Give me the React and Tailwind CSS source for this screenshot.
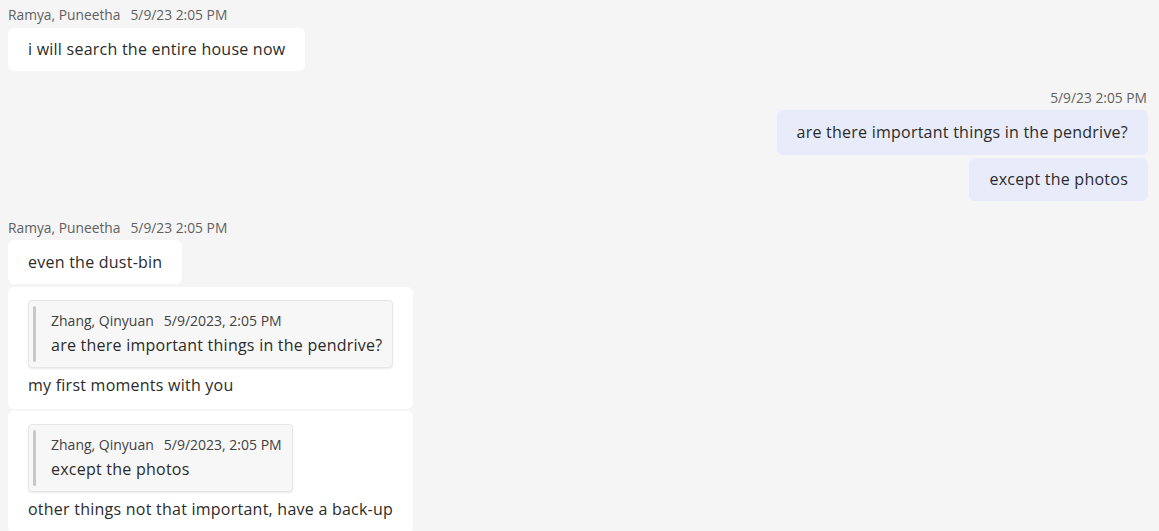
import React from 'react'

const font = { fontFamily: '"Segoe UI", "Open Sans", "Noto Sans", sans-serif' }

const Meta = ({ name, time, right }) => (
    <div className={`flex gap-[10px] text-[13.8px] leading-[16px] text-[#616161] ${right ? 'justify-end pr-[1px]' : ''}`}>
        {name && <span>{name}</span>}
        <span>{time}</span>
    </div>
)

const Quote = ({ name, time, text }) => (
    <div className="inline-flex rounded-[4px] border border-[#e6e6e6] bg-[#f7f7f7] px-[4px] py-[5px] shadow-[0_1px_2px_rgba(0,0,0,0.08)]">
        <div className="w-[3px] rounded-full bg-[#c8c8c8]" />
        <div className="pl-[15px] pr-[6px]">
            <div className="flex gap-[10px] pt-[6px] text-[14px] leading-[18px] text-[#424242]">
                <span>{name}</span>
                <span>{time}</span>
            </div>
            <div className="pt-[2px] pb-[4px] text-[16px] leading-[26px] tracking-[0.015em] text-[#2b2b2b]">{text}</div>
        </div>
    </div>
)

const App = () => {
    return (
        <div className="h-[531px] w-[1159px] overflow-hidden bg-[#f5f5f5] pl-[8px] pr-[11px] pt-[7px] text-[#2b2b2b]" style={font}>
            <Meta name="Ramya, Puneetha" time="5/9/23 2:05 PM" />
            <div className="mt-[5px] inline-block rounded-[6px] bg-white px-[20px] py-[11px] text-[16px] leading-[21px] tracking-[0.015em]">
                i will search the entire house now
            </div>

            <div className="mt-[19px] flex flex-col items-end gap-[3px]">
                <Meta time="5/9/23 2:05 PM" right />
                <div className="mt-[1px] rounded-[6px] bg-[#e8ebfa] px-[20px] py-[12px] text-[16px] leading-[21px] tracking-[0.015em]">
                    are there important things in the pendrive?
                </div>
                <div className="rounded-[6px] bg-[#e8ebfa] px-[20px] py-[11px] text-[16px] leading-[21px] tracking-[0.015em]">
                    except the photos
                </div>
            </div>

            <div className="mt-[19px] flex flex-col items-start gap-[3px]">
                <Meta name="Ramya, Puneetha" time="5/9/23 2:05 PM" />
                <div className="mt-[1px] rounded-[6px] bg-white px-[20px] py-[11px] text-[16px] leading-[22px] tracking-[0.015em]">
                    even the dust-bin
                </div>
                <div className="rounded-[6px] bg-white px-[20px] pt-[13px] pb-[12px]">
                    <Quote name="Zhang, Qinyuan" time="5/9/2023, 2:05 PM" text="are there important things in the pendrive?" />
                    <div className="mt-[5px] text-[16px] leading-[24px] tracking-[0.015em]">my first moments with you</div>
                </div>
                <div className="-mt-[1px] rounded-[6px] bg-white px-[20px] pt-[13px] pb-[12px]">
                    <Quote name="Zhang, Qinyuan" time="5/9/2023, 2:05 PM" text="except the photos" />
                    <div className="mt-[5px] text-[16px] leading-[24px] tracking-[0.015em]">other things not that important, have a back-up</div>
                </div>
            </div>
        </div>
    )
}

export default App
